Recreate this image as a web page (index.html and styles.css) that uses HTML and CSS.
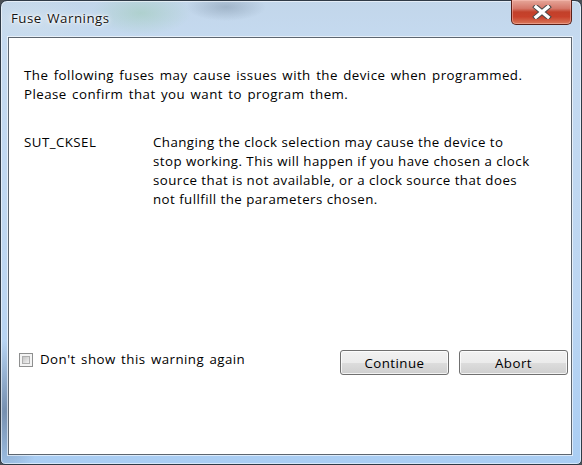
FILE: index.html
```html
<!DOCTYPE html>
<html>
<head>
<meta charset="utf-8">
<link rel="stylesheet" href="styles.css">
</head>
<body>
<div class="window">
  <div class="titlebar">
    <span class="title">Fuse Warnings</span>
    <button class="close" aria-label="Close">
      <svg width="22" height="14" viewBox="0 0 22 14">
        <path d="M5 2 L17 12 M17 2 L5 12" stroke="#4a4a4a" stroke-width="5.4" stroke-linecap="square" fill="none"/>
        <path d="M5 2 L17 12 M17 2 L5 12" stroke="#ffffff" stroke-width="3.4" stroke-linecap="square" fill="none"/>
      </svg>
    </button>
  </div>
  <div class="client">
    <p class="intro">The following fuses may cause issues with the device when programmed.<br>Please confirm that you want to program them.</p>
    <div class="fuse-row">
      <div class="fuse-name">SUT_CKSEL</div>
      <div class="fuse-desc">Changing the clock selection may cause the device to<br>stop working. This will happen if you have chosen a clock<br>source that is not available, or a clock source that does<br>not fullfill the parameters chosen.</div>
    </div>
    <div class="footer">
      <label class="check"><span class="box"><span class="box-inner"></span></span>Don't show this warning again</label>
      <div class="buttons">
        <button class="btn">Continue</button>
        <button class="btn">Abort</button>
      </div>
    </div>
  </div>
</div>
</body>
</html>
```

FILE: styles.css
```css
html, body {
  margin: 0;
  padding: 0;
}
body {
  width: 582px;
  height: 465px;
  background: #4a4f55;
  overflow: hidden;
}
.window {
  box-sizing: border-box;
  width: 582px;
  height: 465px;
  border: 1px solid #2f3a46;
  border-radius: 7px 7px 5px 5px;
  padding: 0 9px 9px 7px;
  display: flex;
  flex-direction: column;
  background:
    radial-gradient(ellipse 40px 70px at 4px 410px, rgba(70,90,120,.55), rgba(70,90,120,0)),
    radial-gradient(ellipse 50px 22px at 140px 12px, rgba(150,200,170,.45), rgba(150,200,170,0)),
    radial-gradient(ellipse 40px 14px at 225px 6px, rgba(110,130,150,.4), rgba(110,130,150,0)),
    radial-gradient(ellipse 60px 25px at 30px 20px, rgba(210,225,235,.6), rgba(210,225,235,0)),
    linear-gradient(to bottom, #c2d6ea 0px, #c5daf0 40px, #bcd6f2 300px, #a9cdf3 465px);
  box-shadow: inset 0 0 0 1px rgba(255,255,255,.55);
}
.titlebar {
  height: 36px;
  display: flex;
  justify-content: space-between;
  align-items: flex-start;
  flex: none;
}
.title {
  font-family: "Open Sans", "Noto Sans", sans-serif;
  font-size: 13.3px;
  letter-spacing: 0.5px;
  word-spacing: 1.5px;
  color: #151515;
  margin: 8px 0 0 3px;
  text-shadow: 0 0 6px #fff, 0 0 3px #fff, 0 0 2px #fff;
}
.close {
  width: 61px;
  height: 25px;
  margin: -1px 0 0 0;
  padding: 0;
  border: 1px solid #5a2018;
  border-top: none;
  border-radius: 0 0 5px 5px;
  background: linear-gradient(to bottom, #e6a79a 0%, #d5786a 35%, #c2402a 50%, #c8412b 70%, #d9785a 100%);
  box-shadow: inset 0 0 0 1px rgba(255,200,190,.45);
  display: flex;
  align-items: center;
  justify-content: center;
}
.close svg { display: block; }
.client {
  flex: 1;
  box-sizing: border-box;
  background: #ffffff;
  border: 1px solid #5d6670;
  box-shadow: 0 0 0 1px rgba(255,255,255,.6);
  padding: 28px 0 0 15px;
  font-family: "Open Sans", "Noto Sans", sans-serif;
  font-size: 13.3px;
  letter-spacing: 0.45px;
  line-height: 19px;
  color: #000;
}
.intro {
  margin: 0;
  word-spacing: 1.5px;
}
.fuse-row {
  display: flex;
  margin-top: 29px;
}
.fuse-name {
  width: 129px;
  flex: none;
}
.footer {
  display: flex;
  justify-content: space-between;
  align-items: flex-start;
  margin-top: 141px;
  padding-right: 3px;
}
.check {
  display: flex;
  align-items: center;
  gap: 7px;
  margin: 0 0 0 -5px;
  word-spacing: 1.5px;
}
.box {
  box-sizing: border-box;
  width: 14px;
  height: 14px;
  border: 1px solid #8e8f8f;
  background: #f4f4f4;
  padding: 2px;
  display: block;
}
.box-inner {
  display: block;
  width: 100%;
  height: 100%;
  box-sizing: border-box;
  border: 1px solid #aeaeae;
  background: linear-gradient(135deg, #c4c4c4, #f2f2f2);
}
.buttons {
  display: flex;
  gap: 10px;
}
.btn {
  box-sizing: border-box;
  width: 109px;
  height: 25px;
  margin: 0;
  padding: 0;
  border: 1px solid #707070;
  border-radius: 3px;
  background: linear-gradient(to bottom, #f2f2f2 0%, #ebebeb 50%, #dddddd 50%, #cfcfcf 100%);
  box-shadow: inset 0 0 0 1px rgba(255,255,255,.75);
  font-family: "Open Sans", "Noto Sans", sans-serif;
  font-size: 13.3px;
  letter-spacing: 0.45px;
  color: #000;
}
```
